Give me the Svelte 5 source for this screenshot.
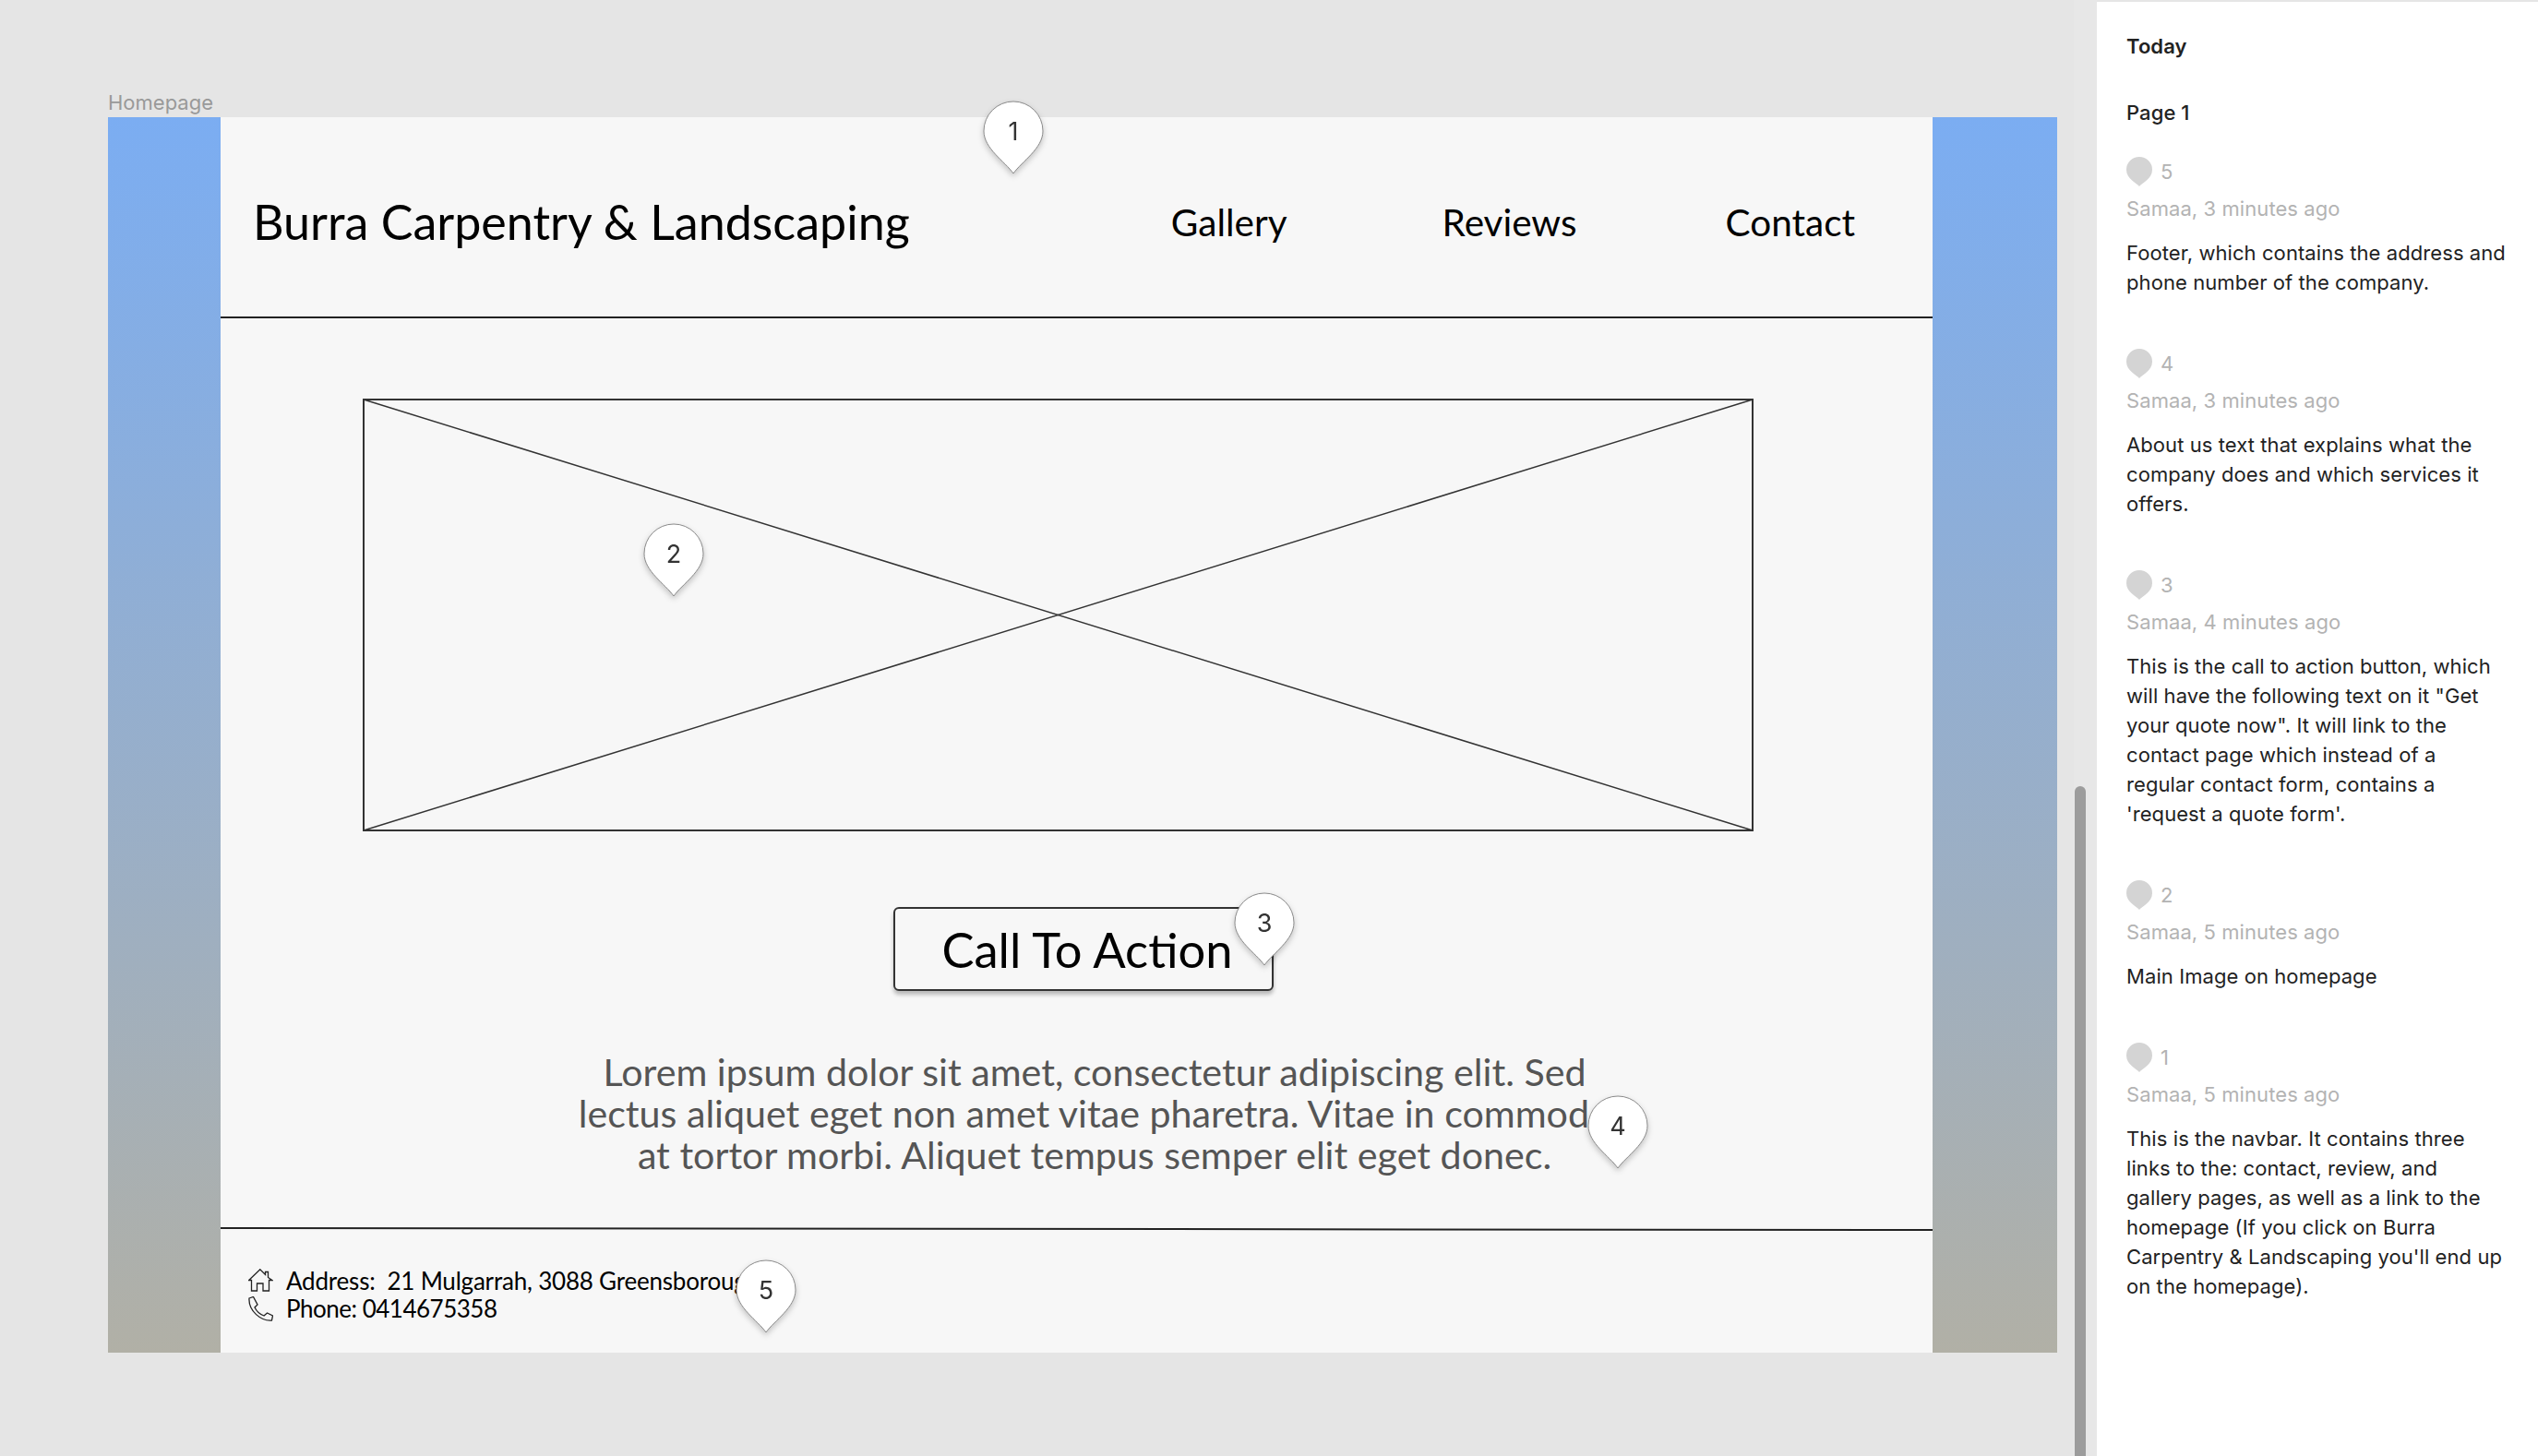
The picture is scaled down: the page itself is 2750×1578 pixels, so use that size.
<script>
	const pins = [
		{ n: 1, x: 1065, y: 109 },
		{ n: 2, x: 697, y: 567 },
		{ n: 3, x: 1337, y: 967 },
		{ n: 4, x: 1720, y: 1187 },
		{ n: 5, x: 797, y: 1365 }
	];

	const comments = [
		{ n: 5, when: '3 minutes ago', text: 'Footer, which contains the address and phone number of the company.' },
		{ n: 4, when: '3 minutes ago', text: 'About us text that explains what the company does and which services it offers.' },
		{ n: 3, when: '4 minutes ago', text: 'This is the call to action button, which will have the following text on it "Get your quote now". It will link to the contact page which instead of a regular contact form, contains a \'request a quote form\'.' },
		{ n: 2, when: '5 minutes ago', text: 'Main Image on homepage' },
		{ n: 1, when: '5 minutes ago', text: "This is the navbar. It contains three links to the: contact, review, and gallery pages, as well as a link to the homepage (If you click on Burra Carpentry & Landscaping you'll end up on the homepage)." }
	];
</script>

<div class="app">
	<main class="canvas">
		<div class="frame-label">Homepage</div>
		<div class="frame">
			<div class="page">
				<header class="nav">
					<div class="brand">Burra Carpentry &amp; Landscaping</div>
					<nav class="links">
						<span>Gallery</span>
						<span class="reviews">Reviews</span>
						<span>Contact</span>
					</nav>
				</header>

				<section class="hero">
					<svg class="placeholder" viewBox="0 0 1507 469" preserveAspectRatio="none">
						<rect x="1" y="1" width="1505" height="467" fill="none" stroke="#333" stroke-width="2" />
						<path d="M1 1 L1506 468 M1506 1 L1 468" fill="none" stroke="#333" stroke-width="1.5" />
					</svg>
					<button class="cta">Call To Action</button>
					<p class="lorem">
						Lorem ipsum dolor sit amet, consectetur adipiscing elit. Sed<br />
						lectus aliquet eget non amet vitae pharetra. Vitae in commodo<br />
						at tortor morbi. Aliquet tempus semper elit eget donec.
					</p>
				</section>

				<svg class="foot-line" viewBox="0 0 1855 4" preserveAspectRatio="none">
					<path d="M0 1 L1855 3" stroke="#222" stroke-width="2" fill="none" />
				</svg>
				<footer class="foot">
					<div class="foot-row address">
						<svg class="ico" viewBox="0 0 27 27" fill="none" stroke="#222" stroke-width="1.3">
							<path d="M0.7 12.5 L12.8 0.8 L18.5 6.5 V3.5 H21.5 V9.5 L26 12.5 H22.5 V24 H16 V16 H9.5 V24 H3.5 V12.5 Z" />
						</svg>
						<span>Address:&nbsp; 21 Mulgarrah, 3088 Greensborough</span>
					</div>
					<div class="foot-row phone">
						<svg class="ico" viewBox="0 0 27 27" fill="none" stroke="#222" stroke-width="1.3">
							<path d="M1 2 L5.5 0.5 L10 9 L7 12 C9 16 12.5 19.5 17 21 L20.5 18 L26.5 21 L25.5 26 C14 27 0 16 1 2 Z" />
						</svg>
						<span>Phone: 0414675358</span>
					</div>
				</footer>
			</div>
		</div>

		{#each pins as pin}
			<div class="pin" style="left: {pin.x}px; top: {pin.y}px">
				<svg viewBox="0 0 66 80" width="66" height="80">
					<path d="M33 79 C24 66 1 52 1 33 A32 32 0 0 1 65 33 C65 52 42 66 33 79 Z" fill="#fff" stroke="#8a8a8a" stroke-width="1" />
				</svg>
				<span class="pin-num">{pin.n}</span>
			</div>
		{/each}

		<div class="scroll-track"><div class="scroll-thumb"></div></div>
	</main>

	<aside class="side">
		<h2 class="day">Today</h2>
		<h3 class="page-name">Page 1</h3>
		{#each comments as c}
			<article class="comment">
				<div class="comment-head">
					<svg viewBox="0 0 28 32" width="28" height="32">
						<path d="M14 32 C11 28 0 24 0 14 A14 14 0 0 1 28 14 C28 24 17 28 14 32 Z" fill="#d4d4d4" />
					</svg>
					<span>{c.n}</span>
				</div>
				<div class="meta">Samaa, {c.when}</div>
				<p class="body">{c.text}</p>
			</article>
		{/each}
	</aside>
</div>

<style>
	:global(body) { margin: 0; }

	.app {
		display: flex;
		width: 2750px;
		height: 1578px;
		overflow: hidden;
		background: #e5e5e5;
	}

	.canvas {
		position: relative;
		width: 2272px;
		flex-shrink: 0;
		padding: 97px 0 0 117px;
		box-sizing: border-box;
	}

	.frame-label {
		font: 22px/26px Inter, sans-serif;
		color: #999;
		height: 30px;
		padding-top: 1px;
		box-sizing: border-box;
	}

	.frame {
		width: 2112px;
		height: 1339px;
		background: linear-gradient(180deg, #7badf2 0%, #b1b0a6 100%);
		padding: 0 135px 0 122px;
		box-sizing: border-box;
	}

	.page {
		height: 100%;
		background: #f7f7f7;
		display: flex;
		flex-direction: column;
		font-family: Lato, "Open Sans", sans-serif;
		color: #000;
	}

	.nav {
		height: 216px;
		border-bottom: 2px solid #222;
		display: flex;
		align-items: center;
		justify-content: space-between;
		padding: 0 84px 0 35px;
		flex-shrink: 0;
	}

	.brand { font-size: 52px; white-space: nowrap; margin-top: 10px; }

	.links { display: flex; font-size: 40.5px; gap: 161px; margin-top: 10px; }
	.reviews { margin-left: 7px; }

	.hero {
		flex: 1;
		display: flex;
		flex-direction: column;
		align-items: center;
		padding-top: 87px;
	}

	.placeholder {
		display: block;
		width: 1507px;
		height: 469px;
		margin-left: -40px;
		flex-shrink: 0;
	}

	.cta {
		margin: 82px 0 0 15px;
		width: 412px;
		height: 91px;
		background: #f7f7f7;
		border: 2px solid #333;
		border-radius: 6px;
		box-shadow: 0 4px 4px rgba(0, 0, 0, 0.25);
		font: 52.5px Lato, sans-serif;
		color: #000;
		padding: 0 0 0 8px;
	}

	.lorem {
		margin: 65px 0 0 39px;
		font-size: 41.2px;
		line-height: 45px;
		color: #555;
		text-align: center;
		white-space: nowrap;
	}

	.foot-line { display: block; width: 100%; height: 4px; flex-shrink: 0; }

	.foot {
		height: 132px;
		box-sizing: border-box;
		padding: 39px 0 0 30px;
		font-size: 26px;
		line-height: 30px;
		flex-shrink: 0;
		overflow: hidden;
	}

	.foot-row { display: flex; align-items: center; gap: 14px; }
	.address { letter-spacing: -0.2px; }
	.phone { letter-spacing: -0.5px; }
	.ico { width: 27px; height: 27px; flex-shrink: 0; }

	.pin {
		position: absolute;
		width: 66px;
		height: 80px;
		filter: drop-shadow(0 3px 3px rgba(0, 0, 0, 0.22));
	}
	.pin svg { display: block; }
	.pin-num {
		position: absolute;
		left: 0;
		right: 0;
		top: 17px;
		text-align: center;
		font: 27px/34px Inter, sans-serif;
		color: #333;
	}

	.scroll-track {
		position: absolute;
		top: 0;
		bottom: 0;
		left: 2247px;
		width: 25px;
		background: #e7e7e7;
	}
	.scroll-thumb {
		position: absolute;
		left: 1px;
		top: 852px;
		bottom: 0;
		width: 12px;
		background: #9c9c9c;
		border-radius: 6px 6px 0 0;
	}

	.side {
		flex: 1;
		margin-top: 2px;
		background: #fff;
		padding: 0 33px 0 32px;
		font-family: Inter, sans-serif;
		color: #222;
		font-size: 22px;
		line-height: 32px;
		letter-spacing: 0.08px;
	}

	.day { margin: 32px 0 0; font-size: 22px; line-height: 32px; font-weight: 600; }
	.page-name { margin: 40px 0 0; font-size: 22px; line-height: 32px; font-weight: 500; }

	.comment { margin-bottom: 54px; }
	.comment:first-of-type { margin-top: 30px; }

	.comment-head {
		display: flex;
		align-items: center;
		gap: 9px;
		color: #b3b3b3;
		height: 36px;
	}

	.meta { color: #b3b3b3; margin-top: 6px; }
	.body { margin: 16px 0 0; }
</style>
